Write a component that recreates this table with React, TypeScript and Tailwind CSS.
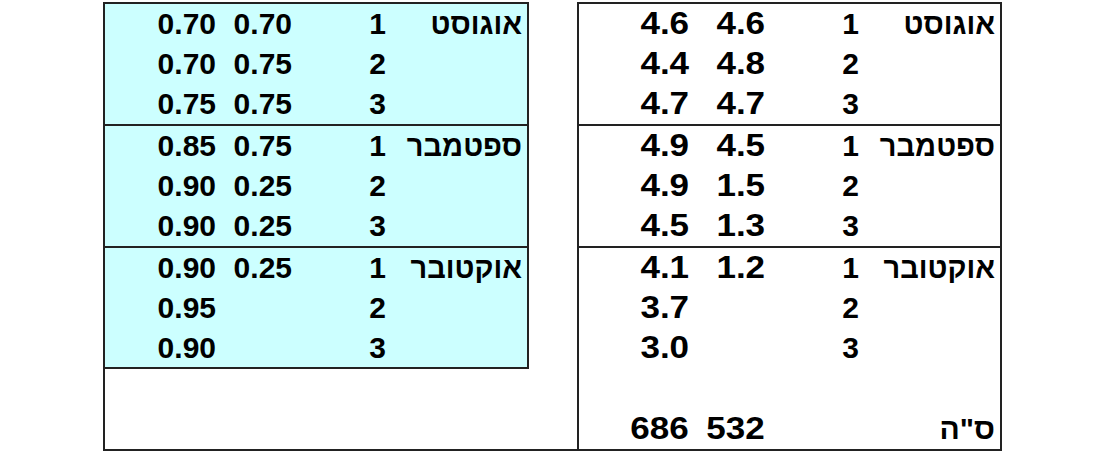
type Row = { week: string; a: string; b?: string }
type Section = { month: string; rows: Row[] }

// a = left value column, b = right value column (as seen on screen)
const cyanData: Section[] = [
  {
    month: 'אוגוסט',
    rows: [
      { week: '1', a: '0.70', b: '0.70' },
      { week: '2', a: '0.70', b: '0.75' },
      { week: '3', a: '0.75', b: '0.75' },
    ],
  },
  {
    month: 'ספטמבר',
    rows: [
      { week: '1', a: '0.85', b: '0.75' },
      { week: '2', a: '0.90', b: '0.25' },
      { week: '3', a: '0.90', b: '0.25' },
    ],
  },
  {
    month: 'אוקטובר',
    rows: [
      { week: '1', a: '0.90', b: '0.25' },
      { week: '2', a: '0.95' },
      { week: '3', a: '0.90' },
    ],
  },
]

const whiteData: Section[] = [
  {
    month: 'אוגוסט',
    rows: [
      { week: '1', a: '4.6', b: '4.6' },
      { week: '2', a: '4.4', b: '4.8' },
      { week: '3', a: '4.7', b: '4.7' },
    ],
  },
  {
    month: 'ספטמבר',
    rows: [
      { week: '1', a: '4.9', b: '4.5' },
      { week: '2', a: '4.9', b: '1.5' },
      { week: '3', a: '4.5', b: '1.3' },
    ],
  },
  {
    month: 'אוקטובר',
    rows: [
      { week: '1', a: '4.1', b: '1.2' },
      { week: '2', a: '3.7' },
      { week: '3', a: '3.0' },
    ],
  },
]

function Num({ v, wide }: { v?: string; wide?: boolean }) {
  if (!wide) return <>{v}</>
  return <span className="inline-block origin-right scale-x-[1.13] text-[31px]">{v}</span>
}

function TableRow({
  month,
  week,
  a,
  b,
  wide,
  total,
}: {
  month?: string
  week: string
  a: string
  b?: string
  wide?: boolean
  total?: boolean
}) {
  return (
    <div className="flex h-[40px] items-center leading-[40px]" dir="rtl">
      <div className={`w-[141px] shrink-0 pr-[5px] text-right ${total ? '' : 'text-[29px]'}`}>{month}</div>
      <div className="w-[94px] shrink-0 text-right">{week}</div>
      <div className="w-[76px] shrink-0 text-right">
        <Num v={b} wide={wide} />
      </div>
      <div className="w-[76px] shrink-0 text-right">
        <Num v={a} wide={wide} />
      </div>
    </div>
  )
}

function Sections({ data, wide }: { data: Section[]; wide?: boolean }) {
  return (
    <>
      {data.map((s, i) => (
        <div key={s.month} className={i > 0 ? 'border-t-2 border-[#222]' : ''}>
          {s.rows.map((r, j) => (
            <TableRow
              key={r.week}
              month={j === 0 ? s.month : undefined}
              week={r.week}
              a={r.a}
              b={r.b}
              wide={wide}
            />
          ))}
        </div>
      ))}
    </>
  )
}

export default function App() {
  return (
    <div className="h-[456px] w-[1116px] bg-white pt-[2px] font-['Liberation_Sans',Arial,sans-serif] text-[30px] font-bold text-black">
      <div className="ml-[103px] flex h-[449px] w-[899px] border-x-2 border-b-2 border-[#222]">
        {/* cyan table */}
        <div className="h-[367px] w-[424px] shrink-0 border-y-2 border-r-2 border-[#222] bg-[#ccffff]">
          <Sections data={cyanData} />
        </div>

        <div className="w-[48px] shrink-0" />

        {/* white table with totals */}
        <div className="flex flex-1 flex-col border-t-2 border-l-2 border-[#222]">
          <Sections data={whiteData} wide />
          <div className="mt-auto">
            <TableRow month={'\u05E1"\u05D4'} week="" a="686" b="532" wide total />
          </div>
        </div>
      </div>
    </div>
  )
}
